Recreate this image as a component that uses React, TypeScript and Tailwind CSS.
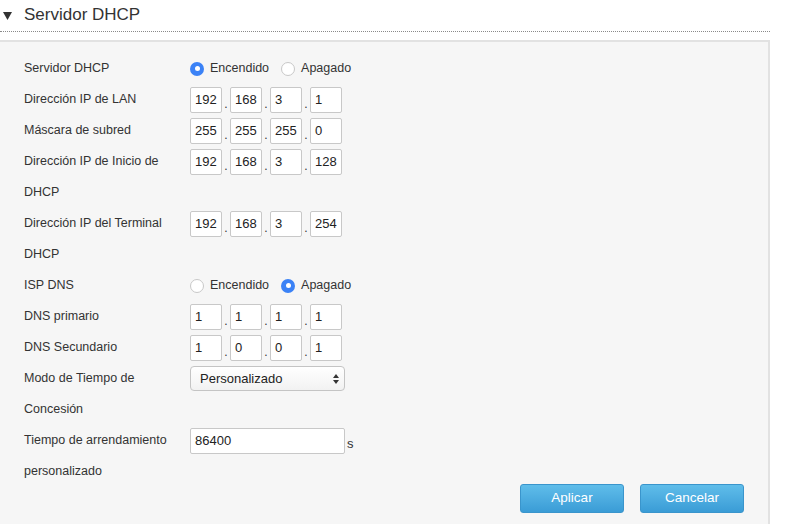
import React from 'react';

type Row = { label: string[]; control: React.ReactNode };

function IpField({ parts }: { parts: string[] }) {
  return (
    <div className="flex items-center">
      {parts.map((p, i) => (
        <React.Fragment key={i}>
          {i > 0 && <span className="w-[8px] text-center text-[12px] leading-none pt-[8px]">.</span>}
          <div className="w-[32px] h-[26px] bg-white border border-[#c8c8c8] rounded-[2px] pl-[4px] text-[13px] leading-[24px] text-[#222]">
            {p}
          </div>
        </React.Fragment>
      ))}
    </div>
  );
}

function Radio({ checked, label }: { checked: boolean; label: string }) {
  return (
    <div className="flex items-center gap-[6px]">
      {checked ? (
        <span className="w-[14px] h-[14px] rounded-full bg-[#3b82f6] flex items-center justify-center">
          <span className="w-[5px] h-[5px] rounded-full bg-white" />
        </span>
      ) : (
        <span className="w-[14px] h-[14px] rounded-full bg-white border border-[#c8c8c8]" />
      )}
      <span className="text-[12.5px] text-[#333]">{label}</span>
    </div>
  );
}

export default function App() {
  const rows: Row[] = [
    {
      label: ['Servidor DHCP'],
      control: (
        <div className="flex items-center gap-[12px]">
          <Radio checked label="Encendido" />
          <Radio checked={false} label="Apagado" />
        </div>
      ),
    },
    { label: ['Dirección IP de LAN'], control: <IpField parts={['192', '168', '3', '1']} /> },
    { label: ['Máscara de subred'], control: <IpField parts={['255', '255', '255', '0']} /> },
    { label: ['Dirección IP de Inicio de', 'DHCP'], control: <IpField parts={['192', '168', '3', '128']} /> },
    { label: ['Dirección IP del Terminal', 'DHCP'], control: <IpField parts={['192', '168', '3', '254']} /> },
    {
      label: ['ISP DNS'],
      control: (
        <div className="flex items-center gap-[12px]">
          <Radio checked={false} label="Encendido" />
          <Radio checked label="Apagado" />
        </div>
      ),
    },
    { label: ['DNS primario'], control: <IpField parts={['1', '1', '1', '1']} /> },
    { label: ['DNS Secundario'], control: <IpField parts={['1', '0', '0', '1']} /> },
    {
      label: ['Modo de Tiempo de', 'Concesión'],
      control: (
        <div className="w-[155px] h-[25px] bg-gradient-to-b from-white to-[#f2f2f2] border border-[#c4c4c4] rounded-[4px] flex items-center justify-between pl-[9px] pr-[5px] text-[13px] text-[#222]">
          <span>Personalizado</span>
          <svg width="6" height="10" viewBox="0 0 6 10">
            <path d="M3 0 L6 4 L0 4 Z M0 6 L6 6 L3 10 Z" fill="#333" />
          </svg>
        </div>
      ),
    },
    {
      label: ['Tiempo de arrendamiento', 'personalizado'],
      control: (
        <div className="flex items-end">
          <div className="w-[155px] h-[26px] bg-white border border-[#c8c8c8] rounded-[2px] pl-[4px] text-[13px] leading-[24px] text-[#222]">
            86400
          </div>
          <span className="text-[13px] text-[#333] ml-[2px] leading-[20px]">s</span>
        </div>
      ),
    },
  ];

  return (
    <div className="w-[786px] h-[524px] bg-white overflow-hidden font-['Liberation_Sans',Arial,sans-serif] text-[#333]">
      <div className="h-[32px] flex items-center pb-[2px] border-b border-dotted border-[#8a8a8a] w-[770px]">
        <svg width="9" height="8" viewBox="0 0 9 8" className="ml-[3px] mt-[3px]">
          <path d="M0 0 L9 0 L4.5 8 Z" fill="#333" />
        </svg>
        <span className="ml-[12px] text-[17px] text-[#333]">Servidor DHCP</span>
      </div>
      <div className="mt-[8px] w-[770px] h-[500px] bg-[#f6f6f6] border-t-2 border-r-2 border-[#e2e2e2] pt-[11px] pl-[24px]">
        {rows.map((r, i) => (
          <div key={i} className="flex">
            <div className="w-[166px] text-[12.5px] leading-[31px] text-[#333]">
              {r.label.map((l, j) => (
                <div key={j}>{l}</div>
              ))}
            </div>
            <div className="h-[31px] flex items-center">{r.control}</div>
          </div>
        ))}
        <div className="flex justify-end gap-[16px] -mt-[3px] pr-[24px]">
          <button className="w-[104px] h-[29px] rounded-[3px] bg-gradient-to-b from-[#5fbdea] to-[#3a9cd6] border border-[#3a95cc] text-white text-[13.5px]">
            Aplicar
          </button>
          <button className="w-[104px] h-[29px] rounded-[3px] bg-gradient-to-b from-[#5fbdea] to-[#3a9cd6] border border-[#3a95cc] text-white text-[13.5px]">
            Cancelar
          </button>
        </div>
      </div>
    </div>
  );
}
